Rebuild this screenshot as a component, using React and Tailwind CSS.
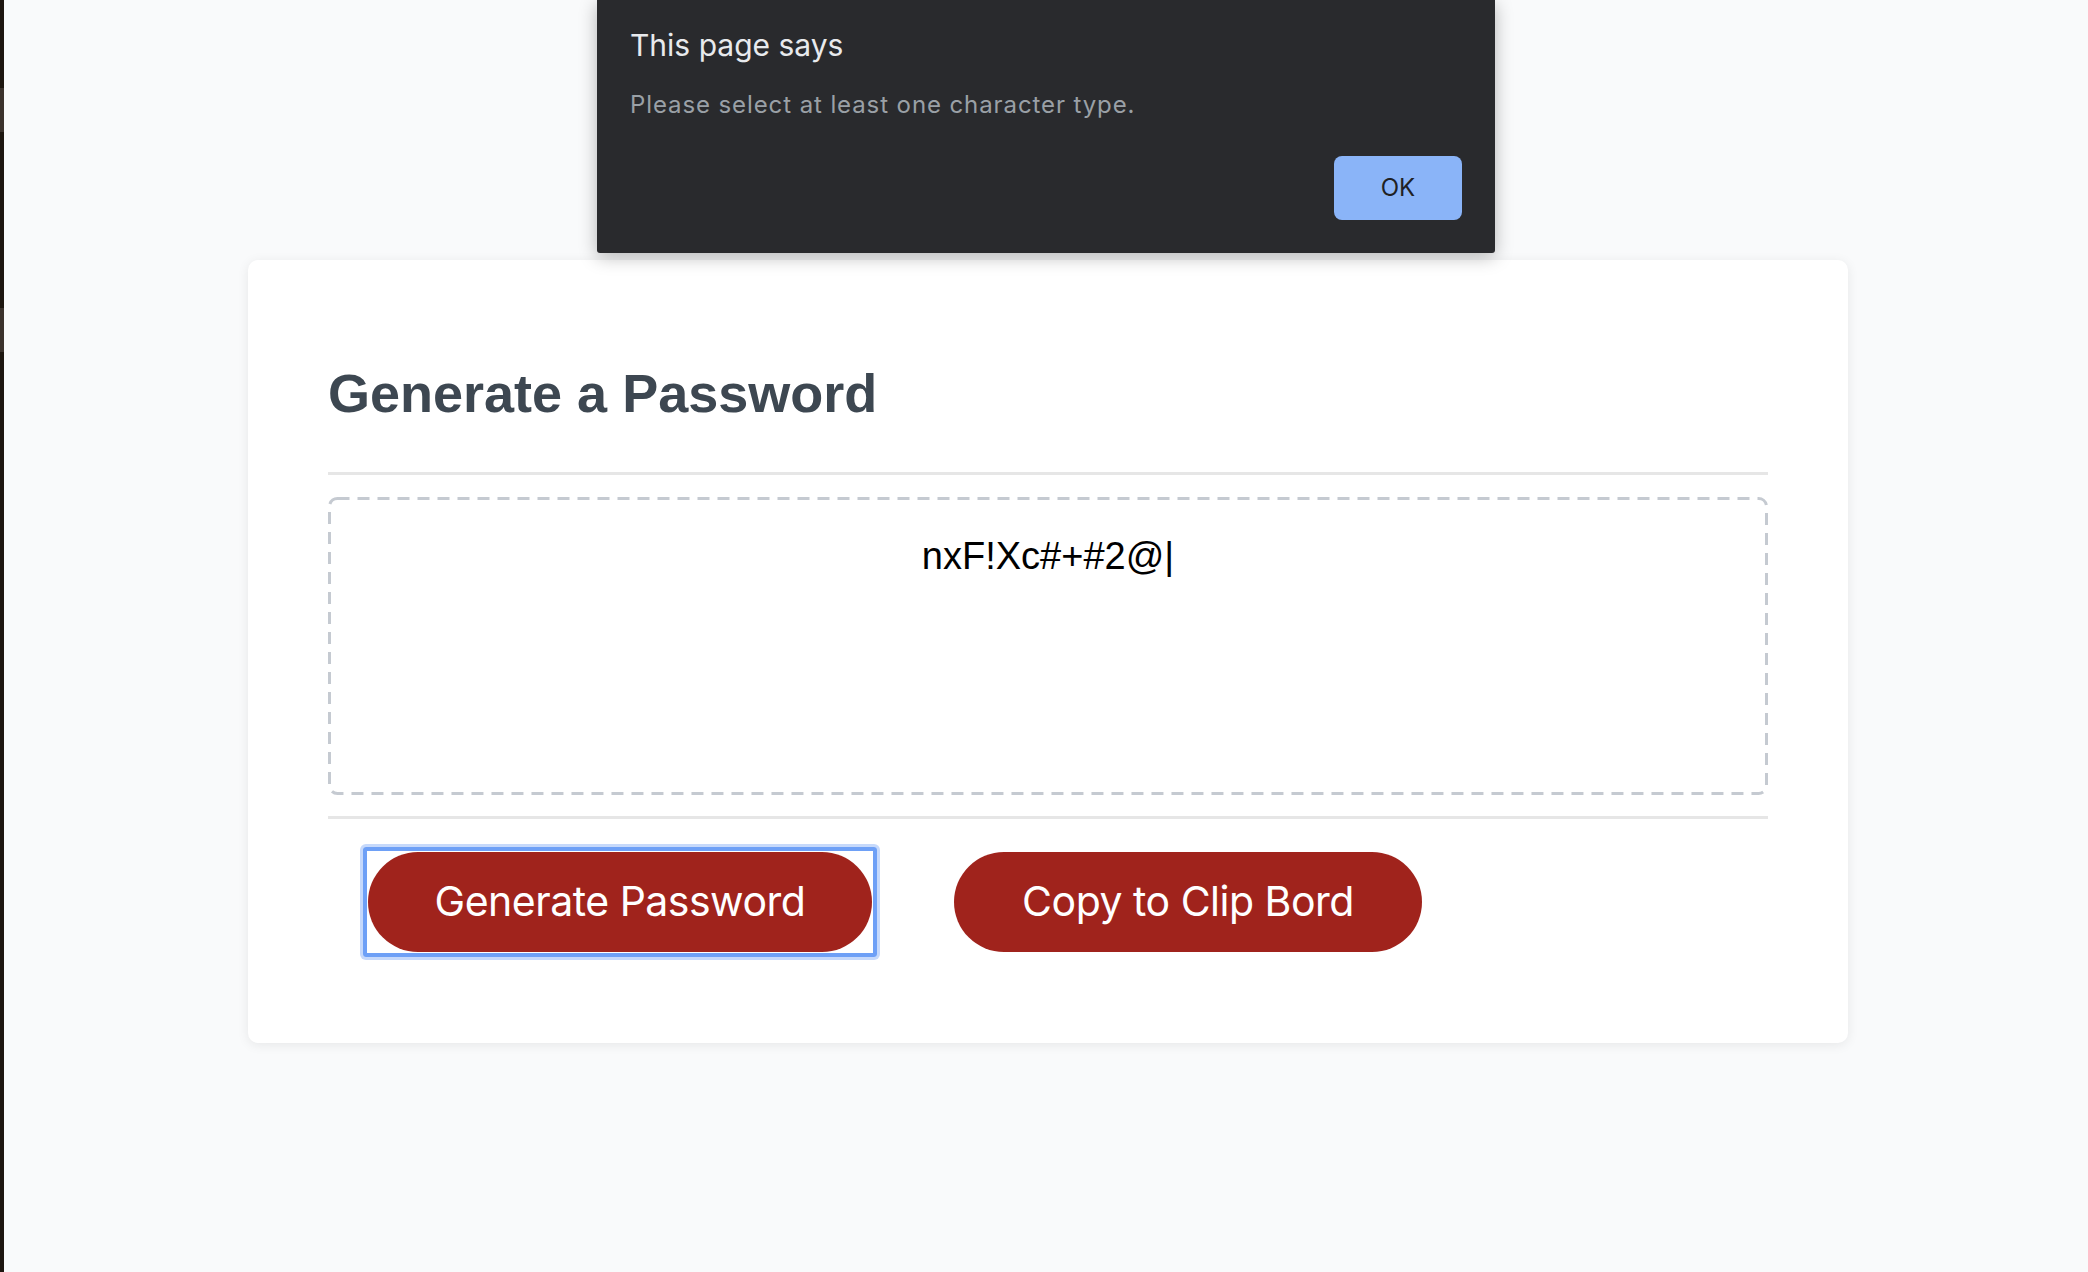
export default function App() {
  return (
    <div className="relative flex h-[1272px] w-[2088px] overflow-hidden bg-[#f9fafb]">
      {/* edge of neighbouring window */}
      <div className="flex w-[4px] flex-col bg-[#1d1610]">
        <div className="mt-[88px] h-[44px] bg-[#3b322c]" />
        <div className="mt-[176px] h-[44px] bg-[#3b322c]" />
      </div>

      <main className="flex-1 pl-[4px] pt-[260px]">
        <div className="mx-auto w-[1600px] rounded-[10px] bg-white px-[80px] pb-[91px] pt-[101px] shadow-[0_2px_12px_rgba(0,0,0,0.08)]">
          <h1
            className="text-[54px] font-bold leading-[64px] text-[#3d4751]"
            style={{ fontFamily: '"Liberation Sans", Arial, sans-serif' }}
          >
            Generate a Password
          </h1>
          <div className="mt-[47px] h-[3px] bg-[#e6e6e6]" />
          <div
            className="relative mt-[22px] h-[298px] pt-[38px] text-center text-[38px] leading-[42px] text-black"
            style={{ fontFamily: '"Liberation Sans", Arial, sans-serif' }}
          >
            <svg
              className="pointer-events-none absolute inset-0"
              width="1440"
              height="298"
              viewBox="0 0 1440 298"
              fill="none"
            >
              <rect
                x="1.5"
                y="1.5"
                width="1437"
                height="295"
                rx="8"
                stroke="#c5cad1"
                strokeWidth="3"
                strokeDasharray="12 8"
              />
            </svg>
            nxF!Xc#+#2@|
          </div>
          <div className="mt-[21px] h-[3px] bg-[#e6e6e6]" />
          <div
            className="mt-[33px] flex items-center"
            style={{ fontFamily: 'Inter, "Liberation Sans", sans-serif' }}
          >
            <div className="relative ml-[40px]">
              <div className="absolute -inset-[5px] rounded-[3px] border-[4px] border-[#6ea0f6] shadow-[0_0_0_3px_#c6d9fb]" />
              <button className="relative flex h-[100px] w-[504px] items-center justify-center rounded-full bg-[#a0231c] text-[41px] tracking-[-0.5px] text-white">
                Generate Password
              </button>
            </div>
            <button className="ml-[82px] flex h-[100px] w-[468px] items-center justify-center rounded-full bg-[#a0231c] text-[41px] tracking-[-0.5px] text-white">
              Copy to Clip Bord
            </button>
          </div>
        </div>
      </main>

      {/* browser alert dialog */}
      <div
        className="absolute left-[597px] top-0 flex h-[253px] w-[898px] flex-col rounded-b-[3px] bg-[#292a2d] pl-[33px] pr-[33px] pt-[27px] shadow-[0_4px_18px_rgba(0,0,0,0.28)]"
        style={{ fontFamily: 'Inter, "Liberation Sans", sans-serif' }}
      >
        <div className="text-[30px] leading-[36px] text-[#e8eaed]">This page says</div>
        <div className="mt-[27px] text-[24px] leading-[30px] tracking-[0.9px] text-[#9aa0a6]">
          Please select at least one character type.
        </div>
        <div className="mt-[36px] flex justify-end">
          <button className="flex h-[64px] w-[128px] items-center justify-center rounded-[8px] bg-[#8ab4f8] text-[24px] text-[#202124]">
            OK
          </button>
        </div>
      </div>
    </div>
  );
}
